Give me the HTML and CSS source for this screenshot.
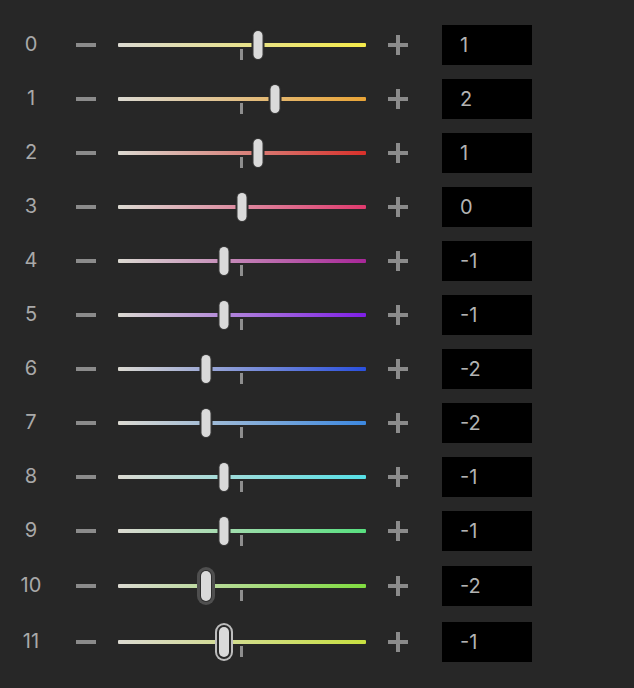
FILE: index.html
```html
<!DOCTYPE html>
<html>
<head>
<meta charset="utf-8">
<link rel="stylesheet" href="styles.css">
</head>
<body>
<div class="list">
  <div class="row"><span class="label">0</span><svg class="step minus" width="20" height="4"><rect width="20" height="4"/></svg><div class="slider" style="--c:#f4ea4a"><div class="track"></div><div class="tick"></div><div class="thumb" style="left:140px"></div></div><svg class="step plus" width="20" height="20"><rect y="8" width="20" height="4"/><rect x="8" width="4" height="20"/></svg><div class="value">1</div></div>
  <div class="row"><span class="label">1</span><svg class="step minus" width="20" height="4"><rect width="20" height="4"/></svg><div class="slider" style="--c:#e9a436"><div class="track"></div><div class="tick"></div><div class="thumb" style="left:157px"></div></div><svg class="step plus" width="20" height="20"><rect y="8" width="20" height="4"/><rect x="8" width="4" height="20"/></svg><div class="value">2</div></div>
  <div class="row"><span class="label">2</span><svg class="step minus" width="20" height="4"><rect width="20" height="4"/></svg><div class="slider" style="--c:#d8302a"><div class="track"></div><div class="tick"></div><div class="thumb" style="left:140px"></div></div><svg class="step plus" width="20" height="20"><rect y="8" width="20" height="4"/><rect x="8" width="4" height="20"/></svg><div class="value">1</div></div>
  <div class="row"><span class="label">3</span><svg class="step minus" width="20" height="4"><rect width="20" height="4"/></svg><div class="slider" style="--c:#e03a6e"><div class="track"></div><div class="tick"></div><div class="thumb" style="left:124px"></div></div><svg class="step plus" width="20" height="20"><rect y="8" width="20" height="4"/><rect x="8" width="4" height="20"/></svg><div class="value">0</div></div>
  <div class="row"><span class="label">4</span><svg class="step minus" width="20" height="4"><rect width="20" height="4"/></svg><div class="slider" style="--c:#a82698"><div class="track"></div><div class="tick"></div><div class="thumb" style="left:106px"></div></div><svg class="step plus" width="20" height="20"><rect y="8" width="20" height="4"/><rect x="8" width="4" height="20"/></svg><div class="value">-1</div></div>
  <div class="row"><span class="label">5</span><svg class="step minus" width="20" height="4"><rect width="20" height="4"/></svg><div class="slider" style="--c:#7e1ee6"><div class="track"></div><div class="tick"></div><div class="thumb" style="left:106px"></div></div><svg class="step plus" width="20" height="20"><rect y="8" width="20" height="4"/><rect x="8" width="4" height="20"/></svg><div class="value">-1</div></div>
  <div class="row"><span class="label">6</span><svg class="step minus" width="20" height="4"><rect width="20" height="4"/></svg><div class="slider" style="--c:#2a50de"><div class="track"></div><div class="tick"></div><div class="thumb" style="left:88px"></div></div><svg class="step plus" width="20" height="20"><rect y="8" width="20" height="4"/><rect x="8" width="4" height="20"/></svg><div class="value">-2</div></div>
  <div class="row"><span class="label">7</span><svg class="step minus" width="20" height="4"><rect width="20" height="4"/></svg><div class="slider" style="--c:#3c88e0"><div class="track"></div><div class="tick"></div><div class="thumb" style="left:88px"></div></div><svg class="step plus" width="20" height="20"><rect y="8" width="20" height="4"/><rect x="8" width="4" height="20"/></svg><div class="value">-2</div></div>
  <div class="row"><span class="label">8</span><svg class="step minus" width="20" height="4"><rect width="20" height="4"/></svg><div class="slider" style="--c:#56e0e6"><div class="track"></div><div class="tick"></div><div class="thumb" style="left:106px"></div></div><svg class="step plus" width="20" height="20"><rect y="8" width="20" height="4"/><rect x="8" width="4" height="20"/></svg><div class="value">-1</div></div>
  <div class="row"><span class="label">9</span><svg class="step minus" width="20" height="4"><rect width="20" height="4"/></svg><div class="slider" style="--c:#58e080"><div class="track"></div><div class="tick"></div><div class="thumb" style="left:106px"></div></div><svg class="step plus" width="20" height="20"><rect y="8" width="20" height="4"/><rect x="8" width="4" height="20"/></svg><div class="value">-1</div></div>
  <div class="row row--tall"><span class="label">10</span><svg class="step minus" width="20" height="4"><rect width="20" height="4"/></svg><div class="slider" style="--c:#80dc40"><div class="track"></div><div class="tick"></div><div class="thumb thumb--hover" style="left:88px"></div></div><svg class="step plus" width="20" height="20"><rect y="8" width="20" height="4"/><rect x="8" width="4" height="20"/></svg><div class="value">-2</div></div>
  <div class="row row--tall"><span class="label">11</span><svg class="step minus" width="20" height="4"><rect width="20" height="4"/></svg><div class="slider" style="--c:#c8e040"><div class="track"></div><div class="tick"></div><div class="thumb thumb--focus" style="left:106px"></div></div><svg class="step plus" width="20" height="20"><rect y="8" width="20" height="4"/><rect x="8" width="4" height="20"/></svg><div class="value">-1</div></div>
</div>
</body>
</html>
```
FILE: styles.css
```css
html, body {
  margin: 0;
  background: #272727;
}
body {
  font-family: Inter, "Liberation Sans", Arial, sans-serif;
  width: 634px;
  height: 688px;
  overflow: hidden;
}
.list {
  display: flex;
  flex-direction: column;
  gap: 14px;
  padding: 25px 0 0 16px;
}
.row {
  display: flex;
  align-items: center;
  height: 40px;
}
.row--tall {
  height: 42px;
}
.label {
  width: 30px;
  text-align: center;
  font-size: 20px;
  line-height: 20px;
  color: #a9a9a9;
  margin-top: -2px;
}
.step {
  display: block;
  fill: #8b8b8b;
  flex: none;
}
.minus {
  margin-left: 30px;
}
.plus {
  margin-left: 22px;
}
.slider {
  position: relative;
  margin-left: 22px;
  width: 248px;
  height: 100%;
  display: flex;
  align-items: center;
  flex: none;
}
.track {
  width: 100%;
  height: 4px;
  border-radius: 1px;
  background: linear-gradient(to right, #dbd9d1, var(--c));
}
.tick {
  position: absolute;
  left: 122px;
  top: calc(50% + 4px);
  width: 3px;
  height: 11px;
  background: #8e8e8e;
}
.thumb {
  position: absolute;
  top: 50%;
  width: 9px;
  height: 28px;
  transform: translate(-50%, -50%);
  border-radius: 5px;
  background: #dadada;
  box-shadow: 0 0 0 1px rgba(60, 60, 60, 0.9), 0 0 0 2px #272727;
}
.thumb--hover {
  width: 10px;
  height: 30px;
  box-shadow: 0 0 0 1px #2e2e2e, 0 0 0 4px #4f4f4f;
}
.thumb--focus {
  width: 10px;
  height: 30px;
  box-shadow: 0 0 0 2px #2a2a2a, 0 0 0 4px #bdbdbd;
}
.value {
  margin-left: 34px;
  width: 90px;
  height: 40px;
  box-sizing: border-box;
  padding-left: 18px;
  background: #000;
  color: #b3b3b3;
  font-size: 20px;
  line-height: 40px;
  flex: none;
}
```
